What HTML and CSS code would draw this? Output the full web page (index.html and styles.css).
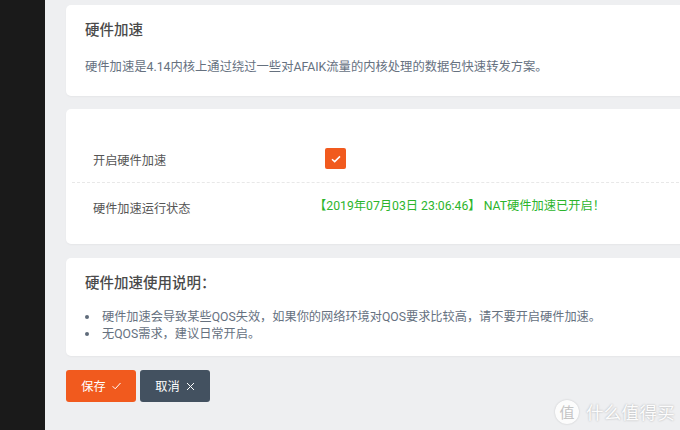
FILE: index.html
```html
<!DOCTYPE html>
<html lang="zh">
<head>
<meta charset="utf-8">
<title>硬件加速</title>
<link rel="stylesheet" href="styles.css">
</head>
<body>
<div class="app">
  <aside class="sidebar"></aside>
  <main class="main">
    <section class="card intro">
      <h2 class="title">硬件加速</h2>
      <p class="desc">硬件加速是4.14内核上通过绕过一些对AFAIK流量的内核处理的数据包快速转发方案。</p>
    </section>
    <section class="card form">
      <div class="row row-check">
        <div class="label">开启硬件加速</div>
        <div class="value">
          <span class="checkbox">
            <svg width="10" height="8" viewBox="0 0 10 8"><path d="M1 4.2 3.7 6.6 9 1.4" fill="none" stroke="#fff" stroke-width="1.5"/></svg>
          </span>
        </div>
      </div>
      <div class="row row-status">
        <div class="label">硬件加速运行状态</div>
        <div class="value status">【2019年07月03日 23:06:46】 NAT硬件加速已开启！</div>
      </div>
    </section>
    <section class="card notes">
      <h3 class="notes-title">硬件加速使用说明：</h3>
      <ul class="list">
        <li class="item">硬件加速会导致某些QOS失效，如果你的网络环境对QOS要求比较高，请不要开启硬件加速。</li>
        <li class="item">无QOS需求，建议日常开启。</li>
      </ul>
    </section>
    <div class="actions">
      <button class="btn btn-save">保存
        <svg width="9" height="8" viewBox="0 0 9 8"><path d="M.6 4.2 3.2 6.8 8.5 1" fill="none" stroke="#fff" stroke-width="1"/></svg>
      </button>
      <button class="btn btn-cancel">取消
        <svg width="9" height="9" viewBox="0 0 9 9"><path d="M1 1 8 8M8 1 1 8" fill="none" stroke="#fff" stroke-width="1"/></svg>
      </button>
    </div>
  </main>
</div>
<div class="watermark">
  <span class="wm-badge">值</span>
  <span class="wm-text">什么值得买</span>
</div>
</body>
</html>
```

FILE: styles.css
```css
* { box-sizing: border-box; }
html, body { margin: 0; height: 100%; overflow: hidden; }
body {
  font-family: Roboto, "Noto Sans CJK SC", sans-serif;
  background: #eeeff1;
  color: #4a4a4a;
}
.app { display: flex; height: 430px; }
.sidebar { width: 45px; flex: none; background: #1a1a1a; }
.main { flex: 1; min-width: 0; padding: 5px 0 0 21px; overflow: hidden; }
.card {
  background: #fff;
  border-radius: 5px;
  margin-right: -10px;
  box-shadow: 0 1px 2px rgba(0, 0, 0, .04);
}
.intro { height: 91px; padding: 16px 19px 0; margin-bottom: 13px; }
.title { margin: 0; font-size: 14.5px; line-height: 20px; font-weight: 500; color: #4a4a4a; }
.desc { margin: 16px 0 0; font-size: 12.3px; line-height: 20px; color: #66717f; }
.form { height: 135px; padding: 28px 6px 0; margin-bottom: 14px; }
.row { display: flex; align-items: center; padding-left: 21px; font-size: 12.2px; }
.row-check { height: 46px; border-bottom: 1px dashed #e8e8e8; }
.row-status { height: 50px; }
.label { width: 233px; flex: none; color: #555; }
.checkbox {
  display: flex;
  align-items: center;
  justify-content: center;
  width: 21px;
  height: 21px;
  background: #f15a1e;
  border-radius: 2px;
  margin-left: -1px;
  margin-top: -2px;
}
.status { color: #2cb52c; margin-left: -12px; margin-top: -7px; font-size: 12.25px; }
.notes { height: 98px; padding: 16px 19px 0; margin-bottom: 14px; }
.notes-title { margin: 0; font-size: 14.5px; line-height: 20px; font-weight: 500; color: #4a4a4a; }
.list { margin: 15px 0 0; padding: 0; list-style: none; font-size: 12.2px; line-height: 16.5px; color: #66717f; }
.item { display: flex; align-items: center; gap: 13px; }
.item::before {
  content: "";
  flex: none;
  width: 4px;
  height: 4px;
  border-radius: 50%;
  background: #5f6b7a;
}
.actions { display: flex; gap: 4px; }
.btn {
  display: flex;
  align-items: center;
  justify-content: center;
  gap: 6px;
  width: 70px;
  height: 32px;
  padding: 0;
  border: 0;
  border-radius: 3px;
  color: #fff;
  font: 400 12.2px Roboto, "Noto Sans CJK SC", sans-serif;
}
.btn-save { background: #f15a1e; }
.btn-cancel { background: #435160; }
.watermark {
  position: absolute;
  left: 555px;
  top: 399px;
  display: flex;
  align-items: center;
  gap: 7px;
  color: #fff;
  opacity: .85;
}
.wm-badge {
  display: flex;
  align-items: center;
  justify-content: center;
  width: 24px;
  height: 24px;
  border-radius: 50%;
  background: #fff;
  color: #bdbdbd;
  font-size: 15px;
  box-shadow: 0 0 2px rgba(0, 0, 0, .2);
}
.wm-text { font-size: 17.5px; letter-spacing: .3px; text-shadow: 0 0 2px rgba(0, 0, 0, .35); }
```
